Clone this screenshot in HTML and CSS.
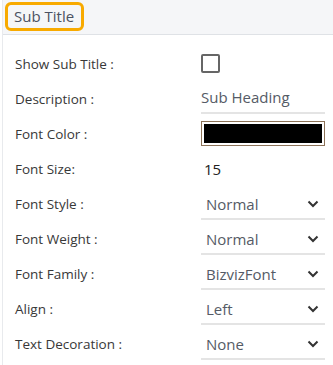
FILE: index.html
```html
<!DOCTYPE html>
<html>
  <head>
    <title>Sub Title</title>
    <link rel="stylesheet" href="styles.css">
  </head>
  <body>
    <div class="panel">
      <div class="panel-header">
        <span class="panel-title">Sub Title</span>
      </div>
      <div class="panel-body">
        <div class="row">
          <label>Show Sub Title :</label>
          <div class="value"><span class="checkbox"></span></div>
        </div>
        <div class="row">
          <label>Description :</label>
          <div class="value"><div class="text-input">Sub Heading</div></div>
        </div>
        <div class="row">
          <label>Font Color :</label>
          <div class="value"><div class="color-box"><span></span></div></div>
        </div>
        <div class="row">
          <label>Font Size:</label>
          <div class="value"><div class="number-input">15</div></div>
        </div>
        <div class="row">
          <label>Font Style :</label>
          <div class="value"><div class="select">Normal<svg viewBox="0 0 12 8"><path d="M1.5 1.5 L6 6 L10.5 1.5"/></svg></div></div>
        </div>
        <div class="row">
          <label>Font Weight :</label>
          <div class="value"><div class="select">Normal<svg viewBox="0 0 12 8"><path d="M1.5 1.5 L6 6 L10.5 1.5"/></svg></div></div>
        </div>
        <div class="row">
          <label>Font Family :</label>
          <div class="value"><div class="select">BizvizFont<svg viewBox="0 0 12 8"><path d="M1.5 1.5 L6 6 L10.5 1.5"/></svg></div></div>
        </div>
        <div class="row">
          <label>Align :</label>
          <div class="value"><div class="select">Left<svg viewBox="0 0 12 8"><path d="M1.5 1.5 L6 6 L10.5 1.5"/></svg></div></div>
        </div>
        <div class="row">
          <label>Text Decoration :</label>
          <div class="value"><div class="select">None<svg viewBox="0 0 12 8"><path d="M1.5 1.5 L6 6 L10.5 1.5"/></svg></div></div>
        </div>
      </div>
    </div>
  </body>
</html>
```

FILE: styles.css
```css
body {
  margin: 0;
  font-family: "Open Sans", Arial, sans-serif;
  background-color: #ffffff;
  color: #333;
}
.panel {
  margin-left: 2px;
  border-left: 1px solid #e8eaed;
  height: 365px;
}
.panel-header {
  height: 35px;
  box-sizing: border-box;
  padding: 2px 0 0 2px;
  background-color: #f5f6f8;
  border-bottom: 1px solid #dfe2e6;
}
.panel-title {
  display: inline-block;
  height: 29px;
  box-sizing: border-box;
  padding: 0 7px 0 6px;
  line-height: 23px;
  border: 3px solid #f8aa00;
  border-radius: 6px;
  font-size: 15px;
  color: #4b5262;
  background: #f5f6f8;
}
.panel-body {
  padding-top: 11px;
}
.row {
  display: flex;
  align-items: center;
  height: 35px;
}
.row label {
  width: 198px;
  box-sizing: border-box;
  padding-left: 12px;
  font-size: 13.5px;
  color: #383838;
}
.value {
  width: 124px;
}
.checkbox {
  display: block;
  width: 15px;
  height: 15px;
  border: 2px solid #666;
  border-radius: 2px;
  margin-top: -1px;
}
.text-input {
  height: 27px;
  line-height: 24px;
  border-bottom: 2px solid #e4e4e4;
  font-size: 15px;
  color: #555b66;
  margin-top: 1px;
}
.color-box {
  height: 25px;
  border: 1px solid #8c7258;
  padding: 2px;
  box-sizing: border-box;
  margin-top: -1px;
}
.color-box span {
  display: block;
  height: 100%;
  background-color: #000;
}
.number-input {
  font-size: 15px;
  color: #222;
  padding-left: 3px;
}
.select {
  height: 28px;
  line-height: 26px;
  border-bottom: 2px solid #e4e4e4;
  font-size: 15px;
  color: #555b66;
  padding-left: 5px;
  display: flex;
  justify-content: space-between;
  align-items: center;
  margin-top: 2px;
}
.select svg {
  width: 12px;
  height: 8px;
  margin-right: 6px;
  fill: none;
  stroke: #333;
  stroke-width: 2;
}
```
